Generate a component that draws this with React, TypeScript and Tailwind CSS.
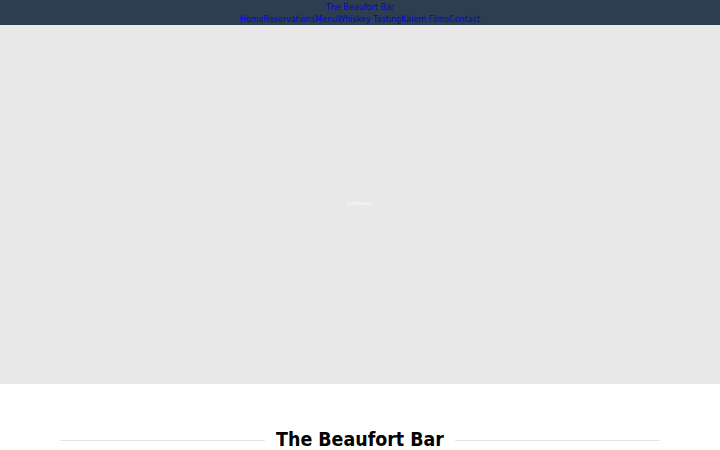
export default function App() {
  return (
    <div className="min-h-screen bg-white" style={{ fontFamily: '"DejaVu Sans", sans-serif' }}>
      <header className="bg-[#2c3e50] h-[25px] pt-[3px] flex flex-col items-center overflow-hidden">
        <a href="#" className="text-[8px] leading-[10px] text-[#0000ee]">The Beaufort Bar</a>
        <nav className="mt-[2px] flex text-[8px] leading-[10px] text-[#0000ee]">
          <a href="#">Home</a>
          <a href="#">Reservations</a>
          <a href="#">Menu</a>
          <a href="#">Whiskey Tasting</a>
          <a href="#">Kalem Films</a>
          <a href="#">Contact</a>
        </nav>
      </header>
      <section className="h-[359px] bg-[#e8e8e8] flex items-center justify-center">
        <span className="text-[4.5px] text-white leading-none">Scroll down</span>
      </section>
      <section className="pt-[42px]">
        <div className="mx-auto w-[600px] flex items-center gap-[11px]">
          <div className="flex-1 h-[1px] bg-[#e5e5e5]" />
          <h2
            className="text-[19.4px] font-bold text-black leading-[28px]"
            style={{ fontFamily: '"DejaVu Sans Condensed", "DejaVu Sans", sans-serif', fontStretch: 'condensed' }}
          >
            The Beaufort Bar
          </h2>
          <div className="flex-1 h-[1px] bg-[#e5e5e5]" />
        </div>
      </section>
    </div>
  );
}
